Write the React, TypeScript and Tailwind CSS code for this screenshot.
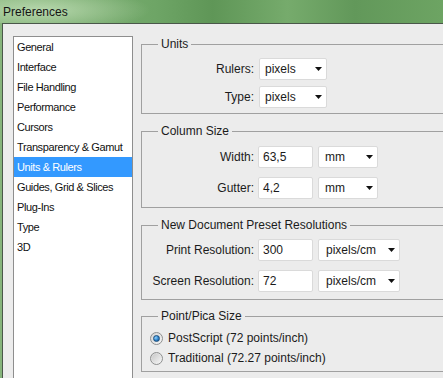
import React from 'react';

const panels = [
  'General',
  'Interface',
  'File Handling',
  'Performance',
  'Cursors',
  'Transparency & Gamut',
  'Units & Rulers',
  'Guides, Grid & Slices',
  'Plug-Ins',
  'Type',
  '3D',
];

function Arrow() {
  return (
    <svg width="7" height="4" viewBox="0 0 7 4" className="shrink-0">
      <path d="M0 0H7L3.5 4Z" fill="#111" />
    </svg>
  );
}

function Select({ value, width, pl = 'pl-[5px]' }: { value: string; width: string; pl?: string }) {
  return (
    <div
      className={`${width} h-[22px] bg-white border border-[#dadada] rounded-[2px] flex items-center justify-between ${pl} pr-[4px] text-[12px] text-[#1a1a1a]`}
    >
      <span>{value}</span>
      <Arrow />
    </div>
  );
}

function Input({ value }: { value: string }) {
  return (
    <div className="w-[55px] h-[22px] bg-white border border-[#dadada] rounded-[2px] flex items-center pl-[4px] text-[12px] text-[#1a1a1a]">
      {value}
    </div>
  );
}

function Label({ children }: { children: React.ReactNode }) {
  return <div className="text-right text-[12px] text-[#1b1b1b] leading-[22px]">{children}</div>;
}

function Group({ title, className, children }: { title: string; className: string; children: React.ReactNode }) {
  return (
    <fieldset className={`border border-[#a0a0a0] ${className}`}>
      <legend className="ml-[16px] px-[3px] text-[12px] leading-[14px] text-[#1b1b1b]">{title}</legend>
      {children}
    </fieldset>
  );
}

function Radio({ checked, label }: { checked?: boolean; label: string }) {
  return (
    <div className="h-[20px] flex items-center gap-[5px] pl-[8px]">
      <div className="w-[13px] h-[13px] rounded-full border border-[#8e8f8f] bg-[linear-gradient(135deg,#d4d4d4,#f6f6f6)] flex items-center justify-center">
        {checked ? (
          <div className="w-[7px] h-[7px] rounded-full bg-[radial-gradient(circle_at_35%_35%,#8fd2ff,#2a7fc8_55%,#134f86)] border border-[#1d4f7c]" />
        ) : (
          <div className="w-[9px] h-[9px] rounded-full bg-[linear-gradient(135deg,#c8c8c8,#f4f4f4)]" />
        )}
      </div>
      <span className="text-[12px] text-[#1b1b1b]">{label}</span>
    </div>
  );
}

export default function App() {
  return (
    <div
      className="w-[443px] h-[378px] overflow-hidden flex flex-col bg-[linear-gradient(90deg,#86b47b,#6ea566_35%,#5f9657_48%,#76ab6c_65%,#62985a_80%,#6da463)]"
      style={{ fontFamily: '"Liberation Sans", Arial, sans-serif' }}
    >
      <div className="h-[23px] shrink-0 flex items-center pl-[3px] text-[12px] text-[#151515] bg-[radial-gradient(ellipse_110px_22px_at_40px_10px,rgba(200,228,190,0.75),transparent)]">
        Preferences
      </div>
      <div className="flex-1 ml-[2px] border-l border-t border-[#4a574a] bg-[#ececec] flex items-start gap-[8px] pl-[10px] pt-[12px]">
        <div className="w-[120px] h-[400px] shrink-0 bg-white border border-[#8e8e8e] text-[11px] tracking-[-0.4px] text-[#111]">
          {panels.map((p) => (
            <div
              key={p}
              className={`h-[20px] leading-[20px] pl-[3px] ${p === 'Units & Rulers' ? 'bg-[#3399ff] text-white' : ''}`}
            >
              {p}
            </div>
          ))}
        </div>

        <div className="w-[330px] shrink-0 mt-[1px] flex flex-col">
          <Group title="Units" className="pb-[5px]">
            <div className="mt-[7px] grid grid-cols-[112px_auto] justify-start gap-x-[5px] gap-y-[6px]">
              <Label>Rulers:</Label>
              <Select value="pixels" width="w-[68px]" />
              <Label>Type:</Label>
              <Select value="pixels" width="w-[68px]" />
            </div>
          </Group>

          <Group title="Column Size" className="mt-[10px] pb-[8px]">
            <div className="mt-[8px] grid grid-cols-[112px_auto_auto] justify-start gap-x-[4px] gap-y-[9px]">
              <Label>Width:</Label>
              <Input value="63,5" />
              <div className="ml-[1px]">
                <Select value="mm" width="w-[60px]" pl="pl-[6px]" />
              </div>
              <Label>Gutter:</Label>
              <Input value="4,2" />
              <div className="ml-[1px]">
                <Select value="mm" width="w-[60px]" pl="pl-[6px]" />
              </div>
            </div>
          </Group>

          <Group title="New Document Preset Resolutions" className="mt-[10px] pb-[7px]">
            <div className="mt-[7px] grid grid-cols-[112px_auto_auto] justify-start gap-x-[4px] gap-y-[9px]">
              <Label>Print Resolution:</Label>
              <Input value="300" />
              <div className="ml-[1px]">
                <Select value="pixels/cm" width="w-[82px]" pl="pl-[7px]" />
              </div>
              <Label>Screen Resolution:</Label>
              <Input value="72" />
              <div className="ml-[1px]">
                <Select value="pixels/cm" width="w-[82px]" pl="pl-[7px]" />
              </div>
            </div>
          </Group>

          <Group title="Point/Pica Size" className="mt-[9px] pb-[3px]">
            <div className="mt-[5px]">
              <Radio checked label="PostScript (72 points/inch)" />
              <Radio label="Traditional (72.27 points/inch)" />
            </div>
          </Group>
        </div>
      </div>
    </div>
  );
}
